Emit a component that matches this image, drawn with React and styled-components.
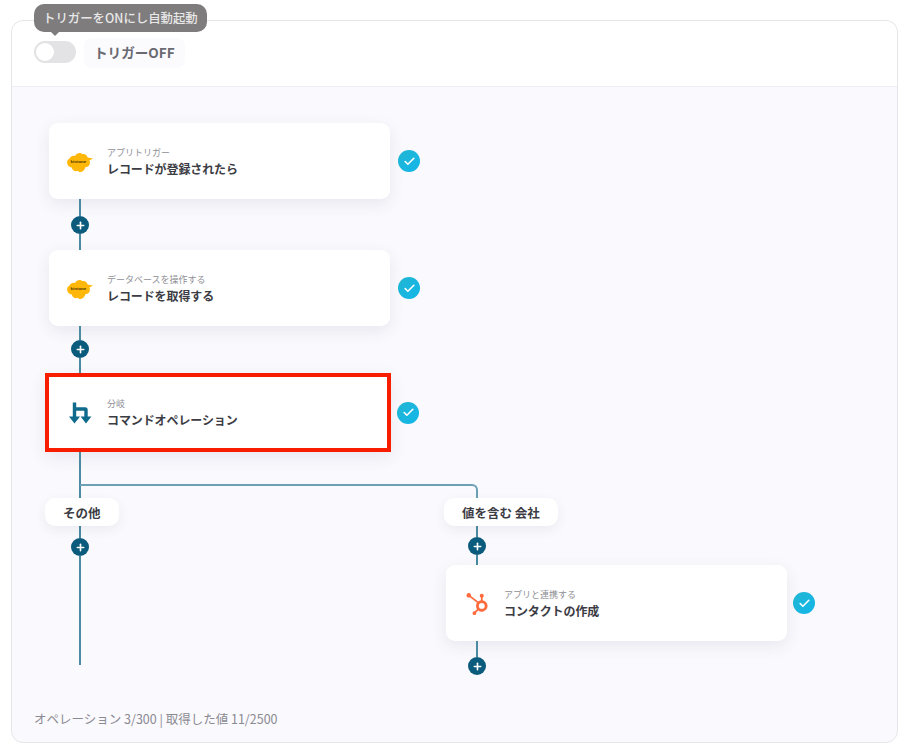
import React from 'react';
import styled, { createGlobalStyle } from 'styled-components';
import { Check, Plus } from 'lucide-react';
import { SiHubspot } from 'react-icons/si';

const teal = '#4a8ba1';
const navy = '#0b5b7d';

const GlobalStyle = createGlobalStyle`
  html, body { margin: 0; padding: 0; background: #fff; }
  body {
    font-family: "Noto Sans CJK JP", "Noto Sans", sans-serif;
    color: #3c3c44;
  }
`;

const Page = styled.div`
  width: 907px;
  height: 750px;
  box-sizing: border-box;
  padding: 20px 9px 7px 11px;
  overflow: hidden;
`;

const Panel = styled.section`
  height: 100%;
  box-sizing: border-box;
  display: flex;
  flex-direction: column;
  border: 1px solid #e6e6ea;
  border-radius: 12px;
  background: #faf9fd;
`;

const Header = styled.header`
  position: relative;
  height: 66px;
  flex: none;
  box-sizing: border-box;
  display: flex;
  align-items: flex-start;
  gap: 8px;
  padding: 17px 0 0 22px;
  background: #fff;
  border-bottom: 1px solid #eeeef2;
  border-radius: 12px 12px 0 0;
`;

const Tooltip = styled.div`
  position: absolute;
  left: 22px;
  top: -17px;
  height: 28px;
  padding: 0 9px;
  display: flex;
  align-items: center;
  border-radius: 10px;
  background: #7f7c7d;
  color: #e8e8e8;
  font-size: 12.4px;
  font-weight: 500;
  white-space: nowrap;

  &::after {
    content: '';
    position: absolute;
    left: 17px;
    bottom: -4px;
    border-style: solid;
    border-width: 4px 4px 0 4px;
    border-color: #7f7c7d transparent transparent transparent;
  }
`;

const Toggle = styled.div`
  width: 42px;
  height: 22px;
  margin-top: 3px;
  padding: 2px;
  box-sizing: border-box;
  border-radius: 11px;
  background: #e3e3e5;

  &::before {
    content: '';
    display: block;
    width: 18px;
    height: 18px;
    border-radius: 50%;
    background: #fff;
  }
`;

const TriggerState = styled.div`
  height: 30px;
  box-sizing: border-box;
  padding: 0 10px 2px;
  display: flex;
  align-items: center;
  border-radius: 8px;
  background: #fbfafd;
  color: #6a6a72;
  font-size: 13.6px;
  font-weight: 700;
`;

const Canvas = styled.main`
  flex: 1;
  display: flex;
  flex-direction: column;
  padding: 36px 0 0 37px;
`;

const Step = styled.div`
  display: flex;
  align-items: center;
  gap: ${({ $highlight }) => ($highlight ? '6px' : '8px')};
  margin-left: ${({ $highlight }) => ($highlight ? '-4px' : '0')};
`;

const Card = styled.div`
  width: ${({ $highlight }) => ($highlight ? '346px' : '341px')};
  height: ${({ $highlight }) => ($highlight ? '79px' : '76px')};
  box-sizing: border-box;
  display: flex;
  align-items: center;
  padding: ${({ $highlight }) => ($highlight ? '0 0 0 16px' : '2px 0 0 16px')};
  border: ${({ $highlight }) => ($highlight ? '4px solid #f91d00' : 'none')};
  border-radius: ${({ $highlight }) => ($highlight ? '0' : '9px')};
  background: #fff;
  box-shadow: 0 5px 16px rgba(50, 50, 90, 0.09);
`;

const IconSlot = styled.div`
  width: 30px;
  height: 30px;
  flex: none;
  margin-right: 12px;
  display: flex;
  align-items: center;
  justify-content: center;
`;

const CardText = styled.div`
  display: flex;
  flex-direction: column;
  gap: 1px;
`;

const Kicker = styled.span`
  font-size: 9px;
  line-height: 13px;
  color: #8f8f96;
`;

const Title = styled.span`
  font-size: 12px;
  line-height: 18px;
  font-weight: 700;
  letter-spacing: -0.1px;
  color: #3c3c44;
`;

const Done = styled.div`
  width: 22px;
  height: 22px;
  flex: none;
  display: flex;
  align-items: center;
  justify-content: center;
  border-radius: 50%;
  background: linear-gradient(135deg, #22b6d2, #12b6ea);
  color: #fff;
`;

const Connector = styled.div`
  width: 18px;
  margin-left: ${({ $left }) => $left}px;
  display: flex;
  flex-direction: column;
  align-items: center;
`;

const Line = styled.div`
  width: 1.5px;
  height: ${({ $h }) => $h}px;
  background: ${teal};
`;

const AddButton = styled.div`
  width: 18px;
  height: 18px;
  flex: none;
  display: flex;
  align-items: center;
  justify-content: center;
  border-radius: 50%;
  background: ${navy};
  color: #fff;
`;

const Branches = styled.div`
  position: relative;
  margin-left: -4px;
  display: grid;
  grid-template-columns: 399px 1fr;

  &::before {
    content: '';
    position: absolute;
    left: 35px;
    top: 32px;
    width: 398px;
    height: 14px;
    box-sizing: border-box;
    border-top: 2px solid #6ba1b3;
    border-right: 2px solid #6ba1b3;
    border-top-right-radius: 6px;
  }
`;

const Branch = styled.div`
  display: flex;
  flex-direction: column;
  align-items: flex-start;
  padding-top: ${({ $top }) => $top}px;
`;

const BranchLabel = styled.div`
  position: relative;
  height: 28px;
  padding: 0 18px;
  display: flex;
  align-items: center;
  border-radius: 10px;
  background: #fff;
  box-shadow: 0 4px 12px rgba(50, 50, 90, 0.07);
  font-size: 12.5px;
  font-weight: 700;
  color: #3c3c44;
`;

const BranchStep = styled.div`
  margin-left: 2px;

  & > div {
    gap: 6px;
  }
`;

const Footer = styled.footer`
  margin: auto 0 0 -15px;
  padding-bottom: 14px;
  font-size: 12.5px;
  line-height: 18px;
  color: #8a8a92;
`;

const LogoSvg = styled.svg`
  margin-top: 1px;
`;

function KintoneLogo() {
  return (
    <LogoSvg width="26" height="21" viewBox="0 0 26 21" aria-hidden="true">
      <path
        fill="#ffb70a"
        d="M2.6 6.4C3.6 3.6 6.4 3.2 8 4 9.4 1 13.4 0 15.6 2.2 17.6 1.6 20 3 20.6 5.4L26 6.4 22.4 8.6C24 12 21.6 15.4 18.6 15 17.4 19.4 13 21.6 10.6 18.8 8.4 20 5.2 18.6 4.8 15.4 2 15.4-.4 12.6.2 9.6.4 8 1.4 7 2.6 6.4Z"
      />
      <text x="3.6" y="10.8" fontSize="4.4" fontWeight="700" fontFamily="Liberation Sans, sans-serif" fill="#4a3300">
        kintone
      </text>
    </LogoSvg>
  );
}

function BranchIcon() {
  return (
    <svg width="24" height="24" viewBox="0 0 24 24" aria-hidden="true">
      <path
        fill="none"
        stroke="#0f6a8c"
        strokeWidth="3.4"
        d="M6.5 1.5v15M6.5 8h10.6c.6 0 .9.3.9.9V16"
      />
      <path fill="#0f6a8c" d="M1 15.5h11L6.5 22.5zM12.6 15.5h10.8L18 22.5z" />
    </svg>
  );
}

function AddNode() {
  return (
    <AddButton>
      <Plus size={11} strokeWidth={3.5} />
    </AddButton>
  );
}

function FlowStep({ icon, kicker, title, highlight }) {
  return (
    <Step $highlight={highlight}>
      <Card $highlight={highlight}>
        <IconSlot>{icon}</IconSlot>
        <CardText>
          <Kicker>{kicker}</Kicker>
          <Title>{title}</Title>
        </CardText>
      </Card>
      <Done>
        <Check size={13} strokeWidth={3} />
      </Done>
    </Step>
  );
}

export default function App() {
  return (
    <Page>
      <GlobalStyle />
      <Panel>
        <Header>
          <Tooltip>トリガーをONにし自動起動</Tooltip>
          <Toggle />
          <TriggerState>トリガーOFF</TriggerState>
        </Header>
        <Canvas>
          <FlowStep icon={<KintoneLogo />} kicker="アプリトリガー" title="レコードが登録されたら" />
          <Connector $left={22}>
            <Line $h={17} />
            <AddNode />
            <Line $h={16} />
          </Connector>
          <FlowStep icon={<KintoneLogo />} kicker="データベースを操作する" title="レコードを取得する" />
          <Connector $left={22}>
            <Line $h={14} />
            <AddNode />
            <Line $h={15} />
          </Connector>
          <FlowStep highlight icon={<BranchIcon />} kicker="分岐" title="コマンドオペレーション" />
          <Branches>
            <Branch>
              <Connector $left={26}>
                <Line $h={46} />
              </Connector>
              <BranchLabel>その他</BranchLabel>
              <Connector $left={26}>
                <Line $h={12} />
                <AddNode />
                <Line $h={109} />
              </Connector>
            </Branch>
            <Branch $top={46}>
              <BranchLabel>値を含む 会社</BranchLabel>
              <Connector $left={24}>
                <Line $h={11} />
                <AddNode />
                <Line $h={10} />
              </Connector>
              <BranchStep>
                <FlowStep
                  icon={<SiHubspot size={22} color="#ff6a3c" />}
                  kicker="アプリと連携する"
                  title="コンタクトの作成"
                />
              </BranchStep>
              <Connector $left={24}>
                <Line $h={16} />
                <AddNode />
              </Connector>
            </Branch>
          </Branches>
          <Footer>オペレーション 3/300 | 取得した値 11/2500</Footer>
        </Canvas>
      </Panel>
    </Page>
  );
}
